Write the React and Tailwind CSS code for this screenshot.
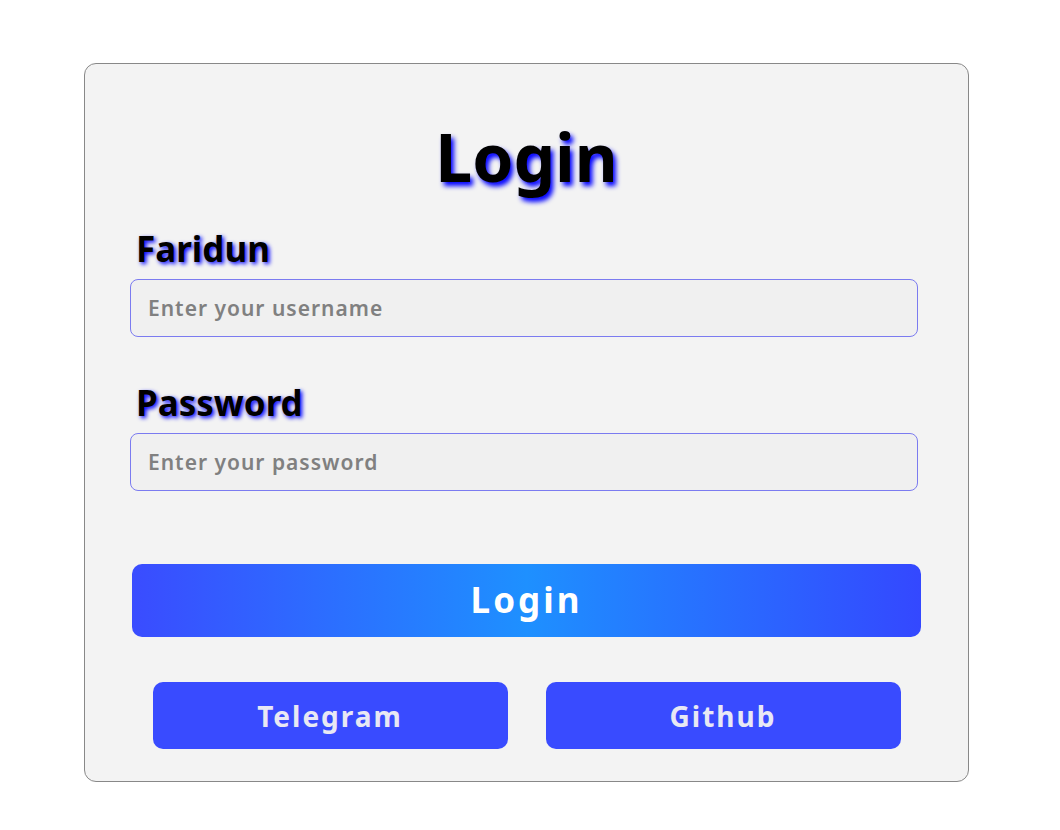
export default function App() {
  const font = { fontFamily: '"Noto Sans", "Open Sans", sans-serif' };
  return (
    <div className="min-h-[830px] w-[1060px] bg-white pt-[63px]" style={font}>
      <div className="ml-[84px] w-[885px] h-[719px] rounded-[12px] border border-[#888888] bg-[#f3f3f3] flex flex-col">
        <h1 className="mt-[52px] text-center text-[66px] leading-[80px] font-bold text-black [text-shadow:3px_4px_5px_#0000ff]">
          Login
        </h1>
        <label className="ml-[51px] mt-[33px] text-[35px] leading-[40px] font-bold text-black [text-shadow:2px_2px_4px_#0000ff]">
          Faridun
        </label>
        <input
          placeholder="Enter your username"
          className="ml-[45px] mt-[10px] w-[788px] h-[58px] rounded-[8px] border border-[#7b7bf0] bg-[#f0f0f0] px-[17px] text-[21px] font-semibold tracking-[1px] outline-none placeholder:text-[#808080]"
        />
        <label className="ml-[51px] mt-[46px] text-[35px] leading-[40px] font-bold text-black [text-shadow:2px_2px_4px_#0000ff]">
          Password
        </label>
        <input
          type="password"
          placeholder="Enter your password"
          className="ml-[45px] mt-[10px] w-[788px] h-[58px] rounded-[8px] border border-[#7b7bf0] bg-[#f0f0f0] px-[17px] text-[21px] font-semibold tracking-[1px] outline-none placeholder:text-[#808080]"
        />
        <button className="ml-[47px] mt-[73px] w-[789px] h-[73px] rounded-[10px] bg-[linear-gradient(90deg,#3a4cff_0%,#1e90ff_50%,#3448ff_100%)] text-white text-[35px] font-bold tracking-[3px]">
          Login
        </button>
        <div className="mt-[45px] flex justify-center gap-[38px]">
          <button className="w-[355px] h-[67px] rounded-[10px] bg-[#394bff] text-[#e8e8f4] text-[28px] font-bold tracking-[2px]">
            Telegram
          </button>
          <button className="w-[355px] h-[67px] rounded-[10px] bg-[#394bff] text-[#e8e8f4] text-[28px] font-bold tracking-[2px]">
            Github
          </button>
        </div>
      </div>
    </div>
  );
}
